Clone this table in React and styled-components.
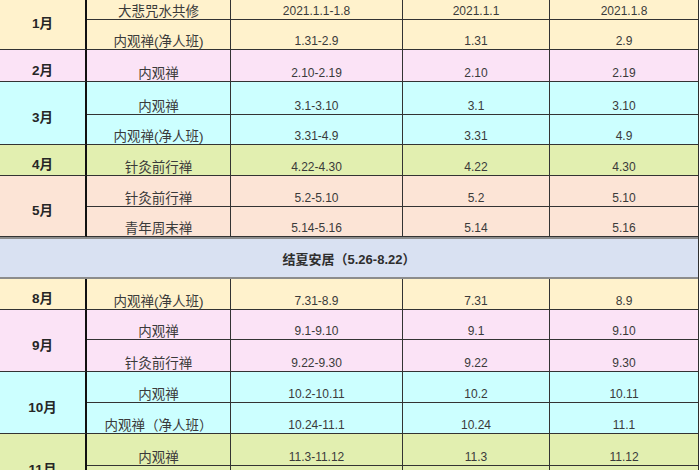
import React from 'react';
import styled, { createGlobalStyle } from 'styled-components';

const Global = createGlobalStyle`
  html, body { margin: 0; padding: 0; background: #ffffff; overflow: hidden; }
  body { width: 700px; height: 470px; }
`;

const FONT = `"Liberation Sans", "Noto Sans CJK SC", sans-serif`;

const Table = styled.div`
  width: 698px;
  margin-top: -11px;
  display: flex;
  flex-direction: column;
  font-family: ${FONT};
  color: #3a3a3a;
  border-right: 1px solid #2e2e2e;
`;

const Group = styled.div`
  display: grid;
  grid-template-columns: 87px 144px 172px 147px 1fr;
  grid-template-rows: ${(p) => p.$rows};
  background: ${(p) => p.$bg};
`;

const MonthCell = styled.div`
  grid-column: 1;
  grid-row: 1 / -1;
  box-sizing: border-box;
  border-right: 2px solid #111;
  border-bottom: 1px solid #333;
  display: flex;
  align-items: center;
  justify-content: center;
  padding-top: 6px;
  font-weight: bold;
  font-size: 13.5px;
  color: #262626;
`;

const Cell = styled.div`
  box-sizing: border-box;
  border-bottom: 1px solid #333;
  border-right: ${(p) => (p.$last ? 'none' : '1px solid #333')};
  display: flex;
  align-items: flex-end;
  justify-content: center;
  line-height: 15px;
  font-size: ${(p) => (p.$cjk ? '13.5px' : '12px')};
  white-space: nowrap;
  overflow: hidden;
`;

const Band = styled.div`
  height: 42px;
  box-sizing: border-box;
  background: #d9e1f2;
  border-top: 2px solid #8c8c8c;
  border-bottom: 2px solid #8c8c8c;
  display: flex;
  align-items: center;
  justify-content: center;
  font-weight: bold;
  font-size: 13px;
  color: #2e2e2e;
`;

const Y = '#fff2cc';
const P = '#fbe3f6';
const C = '#ccffff';
const G = '#e2efb0';
const O = '#fce4d6';

const groups = [
  { m: '1月', bg: Y, h: [31, 30], rows: [['大悲咒水共修', '2021.1.1-1.8', '2021.1.1', '2021.1.8'], ['内观禅(净人班)', '1.31-2.9', '1.31', '2.9']] },
  { m: '2月', bg: P, h: [32], rows: [['内观禅', '2.10-2.19', '2.10', '2.19']] },
  { m: '3月', bg: C, h: [33, 30], rows: [['内观禅', '3.1-3.10', '3.1', '3.10'], ['内观禅(净人班)', '3.31-4.9', '3.31', '4.9']] },
  { m: '4月', bg: G, h: [31], rows: [['针灸前行禅', '4.22-4.30', '4.22', '4.30']] },
  { m: '5月', bg: O, h: [31, 30], rows: [['针灸前行禅', '5.2-5.10', '5.2', '5.10'], ['青年周末禅', '5.14-5.16', '5.14', '5.16']] },
  { band: '结夏安居（5.26-8.22）' },
  { m: '8月', bg: Y, h: [31], rows: [['内观禅(净人班)', '7.31-8.9', '7.31', '8.9']] },
  { m: '9月', bg: P, h: [30, 32], rows: [['内观禅', '9.1-9.10', '9.1', '9.10'], ['针灸前行禅', '9.22-9.30', '9.22', '9.30']] },
  { m: '10月', bg: C, h: [31, 31], rows: [['内观禅', '10.2-10.11', '10.2', '10.11'], ['内观禅（净人班）', '10.24-11.1', '10.24', '11.1']] },
  { m: '11月', bg: G, h: [32, 31], rows: [['内观禅', '11.3-11.12', '11.3', '11.12'], ['', '', '', '']] },
];

export default function App() {
  return (
    <>
      <Global />
      <Table>
        {groups.map((g, i) =>
          g.band ? (
            <Band key={i}>{g.band}</Band>
          ) : (
            <Group key={i} $bg={g.bg} $rows={g.h.map((x) => `${x}px`).join(' ')}>
              <MonthCell>{g.m}</MonthCell>
              {g.rows.map((r, ri) =>
                r.map((t, ci) => (
                  <Cell
                    key={`${ri}-${ci}`}
                    $cjk={ci === 0}
                    $last={ci === 3}
                    style={{ gridRow: ri + 1, gridColumn: ci + 2 }}
                  >
                    {t}
                  </Cell>
                ))
              )}
            </Group>
          )
        )}
      </Table>
    </>
  );
}
